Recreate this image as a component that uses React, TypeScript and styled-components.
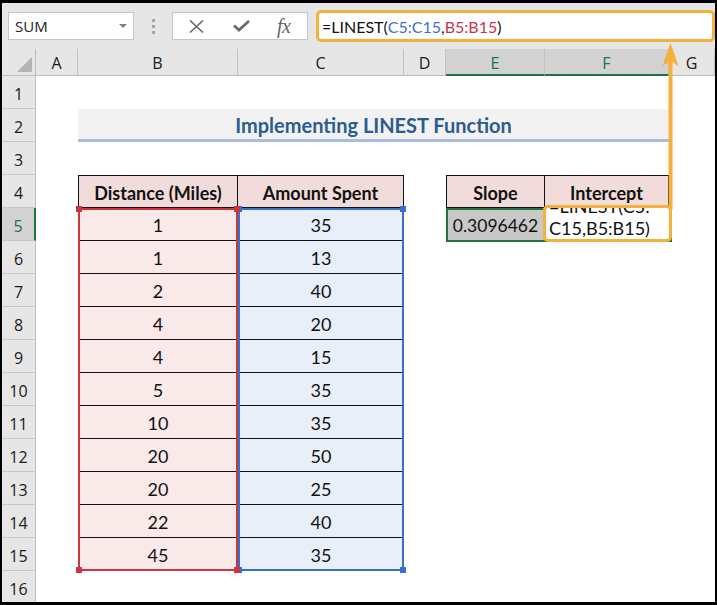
import React from "react";
import styled, { createGlobalStyle } from "styled-components";

const Global = createGlobalStyle`
  html, body { margin: 0; padding: 0; background: #fff; }
  * { box-sizing: border-box; }
`;

const ORANGE = "#f3b23e";
const GREEN = "#217346";
const RED = "#c8363f";
const BLUE = "#3870c8";

const Frame = styled.div`
  position: relative;
  width: 717px;
  height: 605px;
  border-style: solid;
  border-color: #000;
  border-width: 3px 2px 3px 2px;
  background: #fff;
  overflow: hidden;
  display: flex;
  flex-direction: column;
`;

const Toolbar = styled.div`
  height: 46px;
  flex: none;
  background: #e6e6e6;
  display: flex;
  align-items: center;
  padding-left: 6px;
`;

const NameBox = styled.div`
  width: 126px;
  height: 28px;
  background: #fff;
  border: 1px solid #c6c6c6;
  display: flex;
  align-items: center;
  justify-content: space-between;
  padding: 0 6px 0 6px;
  font-family: "Open Sans", "Noto Sans", sans-serif;
  font-size: 15px;
  color: #222;
`;

const DropArrow = styled.span`
  width: 0;
  height: 0;
  border-left: 4px solid transparent;
  border-right: 4px solid transparent;
  border-top: 4px solid #7f7f7f;
`;

const Grip = styled.div`
  width: 3px;
  margin: 0 17px 0 18px;
  display: flex;
  flex-direction: column;
  gap: 3px;
`;

const GripDot = styled.span`
  width: 3px;
  height: 3px;
  background: #a6a6a6;
`;

const Buttons = styled.div`
  width: 136px;
  height: 28px;
  background: #fff;
  border: 1px solid #c6c6c6;
  display: flex;
  align-items: center;
  padding-left: 16px;
`;

const IconSlot = styled.span<{ $w: number }>`
  width: ${(p) => p.$w}px;
  display: flex;
  align-items: center;
  justify-content: flex-start;
`;

const Fx = styled.span`
  font-family: "Liberation Serif", "DejaVu Serif", serif;
  font-style: italic;
  font-size: 20px;
  color: #666;
  letter-spacing: -0.5px;
  line-height: 1;
`;

const FormulaBox = styled.div`
  flex: 1;
  height: 32px;
  margin-left: 8px;
  border: 3px solid ${ORANGE};
  border-radius: 5px;
  background: #fff;
  display: flex;
  align-items: center;
  padding-left: 3px;
  font-family: Lato, "Open Sans", sans-serif;
  font-size: 16px;
  color: #111;
`;

const Ref = styled.span<{ $c: string }>`
  color: ${(p) => p.$c};
`;

const Sheet = styled.div`
  flex: 1;
  display: grid;
  grid-template-columns: 34px 42px 160px 166px 42px 99px 124px 46px;
  grid-template-rows: 27px repeat(16, 33px);
  font-family: Lato, "Open Sans", sans-serif;
  font-size: 18px;
  color: #111;
  overflow: hidden;
`;

const Place = styled.div<{ $c: string; $r: string }>`
  grid-column: ${(p) => p.$c};
  grid-row: ${(p) => p.$r};
`;

const Corner = styled(Place)`
  background: #e6e6e6;
  border-right: 1px solid #bdbdbd;
  border-bottom: 1px solid #bdbdbd;
  position: relative;
  &::after {
    content: "";
    position: absolute;
    right: 3px;
    bottom: 3px;
    width: 0;
    height: 0;
    border-left: 15px solid transparent;
    border-bottom: 15px solid #b4b4b4;
  }
`;

const ColHead = styled(Place)<{ $sel?: boolean }>`
  background: ${(p) => (p.$sel ? "#d2d2d2" : "#e6e6e6")};
  border-right: 1px solid #c3c3c3;
  border-bottom: ${(p) => (p.$sel ? `2px solid ${GREEN}` : "1px solid #bdbdbd")};
  color: ${(p) => (p.$sel ? GREEN : "#1a1a1a")};
  display: flex;
  align-items: center;
  justify-content: center;
  font-family: "Open Sans", "Noto Sans", sans-serif;
  font-size: 16px;
  padding-top: 2px;
`;

const RowHead = styled(Place)<{ $sel?: boolean }>`
  background: ${(p) => (p.$sel ? "#d2d2d2" : "#e6e6e6")};
  border-right: ${(p) => (p.$sel ? `2px solid ${GREEN}` : "1px solid #bdbdbd")};
  border-bottom: 1px solid #c6c6c6;
  color: ${(p) => (p.$sel ? GREEN : "#1a1a1a")};
  display: flex;
  align-items: center;
  justify-content: center;
  font-family: "Open Sans", "Noto Sans", sans-serif;
  font-size: 16px;
  padding-top: 4px;
`;

const Title = styled(Place)`
  background: #f2f2f2;
  border-bottom: 3px solid #a8bcdd;
  display: flex;
  align-items: center;
  justify-content: center;
  font-weight: 700;
  font-size: 20px;
  color: #2b5b8f;
  padding-top: 1px;
`;

const Head = styled(Place)<{ $noLeft?: boolean }>`
  background: #f2dcdb;
  border: 1px solid #111;
  border-left-width: ${(p) => (p.$noLeft ? 0 : 1)}px;
  display: flex;
  align-items: center;
  justify-content: center;
  font-weight: 700;
  padding-top: 2px;
`;

const Data = styled(Place)<{ $tone: "red" | "blue" }>`
  background: ${(p) => (p.$tone === "red" ? "#f9e9e9" : "#e9eff8")};
  border-bottom: 1px solid #111;
  display: flex;
  align-items: center;
  justify-content: center;
  padding-top: 2px;
`;

const Value = styled(Place)`
  background: #c8c8c8;
  display: flex;
  align-items: center;
  justify-content: center;
  padding-top: 2px;
  font-size: 17.5px;
`;

const Range = styled(Place)<{ $color: string }>`
  position: relative;
  border: 2px solid ${(p) => p.$color};
  pointer-events: none;
  z-index: 2;
`;

const Handle = styled.span<{ $color: string; $x: "l" | "r"; $y: "t" | "b" }>`
  position: absolute;
  width: 6px;
  height: 6px;
  background: ${(p) => p.$color};
  ${(p) => (p.$x === "l" ? "left: -4px;" : "right: -4px;")}
  ${(p) => (p.$y === "t" ? "top: -4px;" : "bottom: -4px;")}
`;

const Selection = styled(Place)`
  border: 2px solid ${GREEN};
  margin-right: -3px;
  margin-bottom: -1px;
  z-index: 2;
  pointer-events: none;
`;

const EditBox = styled(Place)`
  margin: -3px -3px -1px -2px;
  border: 3px solid ${ORANGE};
  border-radius: 5px;
  background: #fff;
  z-index: 3;
  overflow: hidden;
  display: flex;
  flex-direction: column;
  justify-content: flex-end;
  padding: 0 0 0 3px;
  line-height: 22px;
  font-size: 18px;
  color: #111;
`;

const Arrow = styled.svg`
  position: absolute;
  left: 658px;
  top: 37px;
  z-index: 5;
  pointer-events: none;
`;

const cols = ["A", "B", "C", "D", "E", "F", "G"];
const dist = [1, 1, 2, 4, 4, 5, 10, 20, 20, 22, 45];
const amount = [35, 13, 40, 20, 15, 35, 35, 50, 25, 40, 35];

export default function App() {
  return (
    <>
      <Global />
      <Frame>
        <Toolbar>
          <NameBox>
            <span>SUM</span>
            <DropArrow />
          </NameBox>
          <Grip>
            <GripDot />
            <GripDot />
            <GripDot />
          </Grip>
          <Buttons>
            <IconSlot $w={44}>
              <svg width="15" height="13" viewBox="0 0 15 13">
                <path d="M1 0.5 L14 12.5 M14 0.5 L1 12.5" stroke="#6b6b6b" strokeWidth="1.6" fill="none" />
              </svg>
            </IconSlot>
            <IconSlot $w={44}>
              <svg width="17" height="12" viewBox="0 0 17 12">
                <path d="M1 5.5 L6 10 L16 1" stroke="#6b6b6b" strokeWidth="2.8" fill="none" />
              </svg>
            </IconSlot>
            <IconSlot $w={30}>
              <Fx>fx</Fx>
            </IconSlot>
          </Buttons>
          <FormulaBox>
            =LINEST(<Ref $c="#3a6fd0">C5:C15</Ref>,<Ref $c="#c9344a">B5:B15</Ref>)
          </FormulaBox>
        </Toolbar>
        <Sheet>
          <Corner $c="1" $r="1" />
          {cols.map((c, i) => (
            <ColHead key={c} $c={String(i + 2)} $r="1" $sel={c === "E" || c === "F"}>
              {c}
            </ColHead>
          ))}
          {Array.from({ length: 16 }, (_, i) => (
            <RowHead key={i} $c="1" $r={String(i + 2)} $sel={i + 1 === 5}>
              {i + 1}
            </RowHead>
          ))}
          <Title $c="3 / 8" $r="3">Implementing LINEST Function</Title>
          <Head $c="3" $r="5">Distance (Miles)</Head>
          <Head $c="4" $r="5" $noLeft>Amount Spent</Head>
          {dist.map((d, i) => (
            <Data key={"b" + i} $c="3" $r={String(i + 6)} $tone="red">
              {d}
            </Data>
          ))}
          {amount.map((a, i) => (
            <Data key={"c" + i} $c="4" $r={String(i + 6)} $tone="blue">
              {a}
            </Data>
          ))}
          <Head $c="6" $r="5">Slope</Head>
          <Head $c="7" $r="5" $noLeft>Intercept</Head>
          <Value $c="6" $r="6">0.3096462</Value>
          <Range $c="4" $r="6 / 17" $color={BLUE}>
            <Handle $color={BLUE} $x="l" $y="t" />
            <Handle $color={BLUE} $x="r" $y="t" />
            <Handle $color={BLUE} $x="l" $y="b" />
            <Handle $color={BLUE} $x="r" $y="b" />
          </Range>
          <Range $c="3" $r="6 / 17" $color={RED}>
            <Handle $color={RED} $x="l" $y="t" />
            <Handle $color={RED} $x="r" $y="t" />
            <Handle $color={RED} $x="l" $y="b" />
            <Handle $color={RED} $x="r" $y="b" />
          </Range>
          <Selection $c="6 / 8" $r="6" />
          <EditBox $c="7" $r="6">
            <span>=LINEST(C5:</span>
            <span>C15,B5:B15)</span>
          </EditBox>
        </Sheet>
        <Arrow width="22" height="172" viewBox="660 40 22 172">
          <line x1="670.5" y1="58" x2="670.5" y2="210" stroke={ORANGE} strokeWidth="4" />
          <polygon points="670.5,43 678.5,66 670.5,61 662.5,66" fill={ORANGE} />
        </Arrow>
      </Frame>
    </>
  );
}
